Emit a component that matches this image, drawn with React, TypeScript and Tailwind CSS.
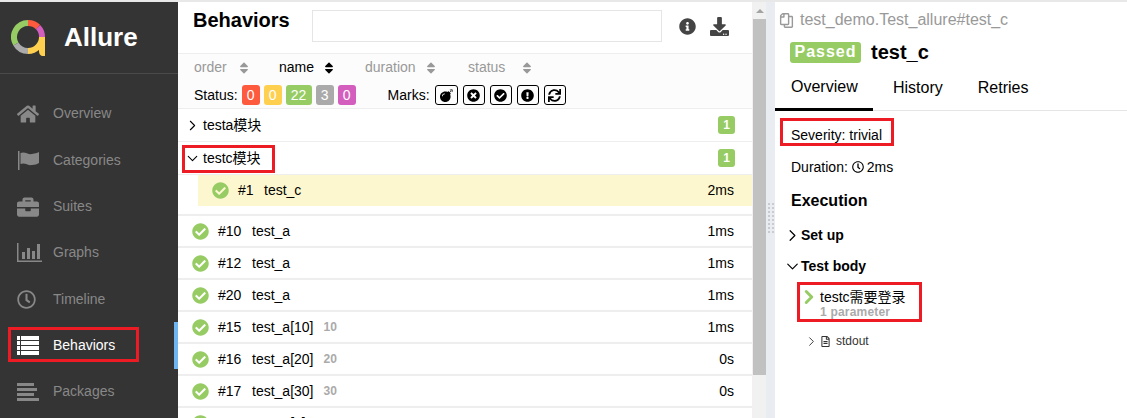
import React from 'react';
import {
  FaHome, FaBriefcase, FaRegClock, FaInfoCircle, FaDownload,
  FaBomb, FaTimesCircle, FaCheckCircle, FaExclamationCircle, FaSync, FaSort, FaRegCopy, FaRegFileAlt,
} from 'react-icons/fa';
import { ChevronRight, ChevronDown } from 'lucide-react';

const FlagIcon = () => (
  <svg width="23" height="19" viewBox="0 0 23 19" fill="currentColor">
    <rect x="1" y="0" width="1.500" height="19" />
    <path d="M3.500 2 C8 0 11 4 15 3 C18 2.500 20 2 22 1 V12 C20 13 18 14 15 14 C11 15 8 11 3.500 13 Z" />
  </svg>
);

const ChartIcon = () => (
  <svg width="25" height="19" viewBox="0 0 25 19" fill="currentColor">
    <rect x="0" y="0" width="1.500" height="19" />
    <rect x="0" y="17.500" width="25" height="1.500" />
    <rect x="5" y="9" width="3" height="7" />
    <rect x="10" y="5" width="3" height="11" />
    <rect x="15" y="8" width="3" height="8" />
    <rect x="20" y="1" width="3" height="15" />
  </svg>
);

const ListIcon = () => (
  <svg width="22" height="19" viewBox="0 0 22 19" fill="currentColor">
    {[0, 5, 10, 15].map(y => (
      <React.Fragment key={y}>
        <rect x="0" y={y} width="3" height="4" />
        <rect x="4" y={y} width="18" height="4" />
      </React.Fragment>
    ))}
  </svg>
);

const PackagesIcon = () => (
  <svg width="22" height="18" viewBox="0 0 22 18" fill="currentColor">
    <rect x="0" y="0" width="17" height="3" />
    <rect x="0" y="5" width="20" height="3" />
    <rect x="0" y="10" width="17" height="3" />
    <rect x="0" y="15" width="22" height="3" />
  </svg>
);

const NAV = [
  { label: 'Overview', icon: <FaHome size={22} /> },
  { label: 'Categories', icon: <FlagIcon /> },
  { label: 'Suites', icon: <FaBriefcase size={22} /> },
  { label: 'Graphs', icon: <ChartIcon /> },
  { label: 'Timeline', icon: <FaRegClock size={19} /> },
  { label: 'Behaviors', icon: <ListIcon />, active: true },
  { label: 'Packages', icon: <PackagesIcon /> },
];

const ROWS = [
  { id: '#10', name: 'test_a', time: '1ms' },
  { id: '#12', name: 'test_a', time: '1ms' },
  { id: '#20', name: 'test_a', time: '1ms' },
  { id: '#15', name: 'test_a[10]', param: '10', time: '1ms' },
  { id: '#16', name: 'test_a[20]', param: '20', time: '0s' },
  { id: '#17', name: 'test_a[30]', param: '30', time: '0s' },
  { id: '#18', name: 'test_a[1]_10', param: '10, 5', time: '1ms' },
];

const STATUS = [
  { n: '0', cls: 'w-[18px] bg-[#fd5a3e]' },
  { n: '0', cls: 'w-[18px] bg-[#ffd050]' },
  { n: '22', cls: 'w-[26px] bg-[#97cc64]' },
  { n: '3', cls: 'w-[18px] bg-[#aaaaaa]' },
  { n: '0', cls: 'w-[18px] bg-[#d35ebe]' },
];

const MARKS = [FaBomb, FaTimesCircle, FaCheckCircle, FaExclamationCircle, FaSync];

const Logo = () => (
  <svg width="36" height="36" viewBox="0 0 36 36" fill="none" strokeWidth="6">
    <path d="M17 3 A14 14 0 0 0 4.900 24" stroke="#97cc64" />
    <path d="M17 3 A14 14 0 0 1 27 7" stroke="#fd5a3e" />
    <path d="M27 7 A14 14 0 0 1 31 17" stroke="#d35ebe" />
    <path d="M31 17 V31 Q31 33.500 34 33.500 M31 17 A14 14 0 0 1 17 31" stroke="#ffd050" />
    <path d="M17 31 A14 14 0 0 1 4.900 24" stroke="#aaaaaa" />
  </svg>
);

const SortHead = ({ label, active, className }: { label: string; active?: boolean; className: string }) => (
  <div className={`flex items-center ${className} ${active ? 'text-black' : 'text-[#999]'}`}>
    <span>{label}</span>
    <span className={`ml-auto ${active ? 'text-black' : 'text-[#999]'}`}>
      <FaSort size={14} />
    </span>
  </div>
);

const GroupRow = ({ name, open, boxed }: { name: string; open?: boolean; boxed?: boolean }) => (
  <div className="relative flex items-center h-[33px] shrink-0 border-b border-[#eee] pl-[8px] pr-[17px]">
    <span className="w-[17px] -ml-[2px] mr-[2px] flex items-center">
      {open ? <ChevronDown size={19} strokeWidth={1.5} /> : <ChevronRight size={19} strokeWidth={1.5} />}
    </span>
    <span>{name}</span>
    <span className="ml-auto flex items-center justify-center w-[17px] h-[18px] rounded-[3px] bg-[#97cc64] text-white text-[12px] font-bold">
      1
    </span>
    {boxed && <div className="absolute left-[4px] top-[3px] w-[93px] h-[28px] border-[3px] border-[#ed1c24]" />}
  </div>
);

const ResultRow = ({ id, name, param, time }: { id: string; name: string; param?: string; time: string }) => (
  <div className="flex items-center h-[32px] border-b-2 border-[#eee] pl-[14px] pr-[18px] shrink-0">
    <FaCheckCircle size={17} className="text-[#97cc64] shrink-0" />
    <span className="ml-[9px] w-[34px]">{id}</span>
    <span>{name}</span>
    {param && <span className="ml-[10px] text-[12px] font-bold text-[#aaa]">{param}</span>}
    <span className="ml-auto">{time}</span>
  </div>
);

export default function App() {
  return (
    <div className="h-[418px] w-[1127px] overflow-hidden flex flex-col bg-white text-[14px] text-black font-['Liberation_Sans','Noto_Sans_CJK_SC',sans-serif]">
      <div className="h-[2px] shrink-0 bg-[#e8e8e8]" />
      <div className="flex flex-1 min-h-0">
        {/* Side nav */}
        <aside className="w-[178px] shrink-0 bg-[#343434] text-[#888]">
          <div className="flex items-center h-[72px] pl-[11px] border-b border-[#4a4a4a]">
            <Logo />
            <span className="ml-[17px] text-[26px] font-bold text-white">Allure</span>
          </div>
          <nav className="pt-[16.800px]">
            {NAV.map(({ label, icon, active }) => (
              <div key={label} className="relative flex items-center h-[46.300px] pl-[17px]">
                <span className={`w-[36px] flex items-center ${active ? 'text-white' : ''}`}>{icon}</span>
                <span className={active ? 'text-white' : ''}>{label}</span>
                {active && (
                  <>
                    <div className="absolute left-[8px] top-[5px] w-[131px] h-[35px] border-[3px] border-[#ed1c24]" />
                    <div className="absolute right-0 top-0 w-[4px] h-full bg-[#6eb5f2]" />
                  </>
                )}
              </div>
            ))}
          </nav>
        </aside>

        {/* Tree pane */}
        <main className="w-[574px] shrink-0 flex flex-col">
          <div className="flex items-center h-[52px] shrink-0 border-b border-[#eee] pl-[15px]">
            <h2 className="w-[119px] shrink-0 -mt-[16px] text-[20px] font-bold">Behaviors</h2>
            <div className="w-[350px] shrink-0 h-[32px] border border-[#e5e5e5] -mt-[4px]" />
            <FaInfoCircle size={17} className="ml-[17px] -mt-[3px] text-[#444]" />
            <FaDownload size={19} className="ml-[14px] -mt-[3px] text-[#444]" />
          </div>
          <div className="h-[55px] shrink-0 bg-[#fcfcfc] border-b border-[#eee] pl-[16px]">
            <div className="flex items-center h-[27px]">
              <SortHead label="order" className="w-[57px]" />
              <SortHead active label="name" className="ml-[28px] w-[57px]" />
              <SortHead label="duration" className="ml-[29px] w-[73px]" />
              <SortHead label="status" className="ml-[30px] w-[66px]" />
            </div>
            <div className="flex items-center h-[28px]">
              <span>Status:</span>
              <div className="ml-[4px] flex gap-[4px]">
                {STATUS.map((s, i) => (
                  <span key={i} className={`flex items-center justify-center h-[20px] rounded-[3px] text-white ${s.cls}`}>
                    {s.n}
                  </span>
                ))}
              </div>
              <span className="ml-[32px]">Marks:</span>
              <div className="ml-[5px] flex gap-[5px]">
                {MARKS.map((Icon, i) => (
                  <span key={i} className={`flex items-center justify-center h-[20px] border border-black rounded-[3px] ${i === 0 ? 'w-[23px]' : 'w-[22px]'}`}>
                    <Icon size={13} />
                  </span>
                ))}
              </div>
            </div>
          </div>
          <GroupRow name="testa模块" />
          <GroupRow name="testc模块" open boxed />
          <div className="ml-[20px] flex items-center h-[31px] shrink-0 bg-[#fdf7cf] pl-[14px] pr-[18px]">
            <FaCheckCircle size={17} className="text-[#97cc64] shrink-0" />
            <span className="ml-[9px] w-[26px]">#1</span>
            <span>test_c</span>
            <span className="ml-auto">2ms</span>
          </div>
          <div className="h-[10px] shrink-0 border-b-2 border-[#eee]" />
          {ROWS.map(r => (
            <ResultRow key={r.id} {...r} />
          ))}
        </main>

        {/* Scrollbar */}
        <div className="w-[14px] shrink-0 flex flex-col bg-[#f1f1f1] pl-[1px]">
          <div className="h-[17px] flex items-center justify-center">
            <span className="w-0 h-0 border-x-[4px] border-x-transparent border-b-[4px] border-b-[#a3a3a3]" />
          </div>
          <div className="h-[148px] shrink-0 bg-[#c1c1c1] flex-1 mb-[43px]" />
        </div>

        {/* Splitter */}
        <div className="w-[9px] shrink-0 bg-[#e9edf2] flex items-center justify-center">
          <div className="grid grid-cols-2 gap-[2px] mt-[15px]">
            {Array.from({ length: 16 }).map((_, i) => (
              <span key={i} className="w-[2px] h-[2px] bg-[#c8ccd0]" />
            ))}
          </div>
        </div>

        {/* Test result */}
        <section className="flex-1 min-w-0">
          <div className="flex items-center h-[36px] pl-[4px] text-[16px] text-[#999]">
            <FaRegCopy size={15} className="mr-[6px] scale-x-[-1]" />
            <span>test_demo.Test_allure#test_c</span>
          </div>
          <div className="flex items-center h-[28px] pl-[15px]">
            <span className="flex items-center justify-center w-[71px] h-[21px] rounded-[3px] bg-[#97cc64] text-white text-[16px] font-bold tracking-[1px]">
              Passed
            </span>
            <span className="ml-[10px] text-[20px] font-bold">test_c</span>
          </div>
          <div className="flex h-[45px] border-b border-[#e5e5e5] text-[16px]">
            <div className="w-[98px] flex items-center pl-[16px] border-b-[3px] border-black -mb-[1px]">Overview</div>
            <div className="ml-[20px] flex items-center">History</div>
            <div className="ml-[35px] flex items-center">Retries</div>
          </div>
          <div className="pl-[16px]">
            <div className="relative flex items-center h-[36px] mt-[6px]">
              Severity: trivial
              <div className="absolute -left-[11px] top-[1px] w-[114px] h-[28px] border-[3px] border-[#ed1c24]" />
            </div>
            <div className="flex items-center h-[26px] mt-[1px]">
              Duration:
              <FaRegClock size={12} className="ml-[4px] mr-[3px]" />
              2ms
            </div>
            <h3 className="mt-[6px] text-[16px] font-bold leading-[30px]">Execution</h3>
          </div>
          <div className="mt-[4px] pl-[8px] font-bold">
            <div className="flex items-center h-[31px]">
              <ChevronRight size={19} strokeWidth={1.5} className="mr-[-1px]" />
              Set up
            </div>
            <div className="flex items-center h-[31px]">
              <ChevronDown size={19} strokeWidth={1.5} className="mr-[-1px]" />
              Test body
            </div>
          </div>
          <div className="relative ml-[22px] h-[40px] pl-[8px]">
            <div className="flex items-center h-[24px] pt-[6px]">
              <ChevronRight size={22} strokeWidth={3.2} className="-ml-[7px] text-[#97cc64]" />
              testc需要登录
            </div>
            <div className="ml-[15px] text-[12px] leading-[13px] font-bold tracking-[0.2px] text-[#aaa]">1 parameter</div>
            <div className="absolute left-0 top-0 w-[125px] h-[40px] border-[3px] border-[#ed1c24]" />
          </div>
          <div className="flex items-center h-[20px] mt-[9px] pl-[29px] text-[12px] text-[#333]">
            <ChevronRight size={15} strokeWidth={1.5} />
            <FaRegFileAlt size={11} className="ml-[1px] mr-[5px]" />
            stdout
          </div>
        </section>
      </div>
    </div>
  );
}
